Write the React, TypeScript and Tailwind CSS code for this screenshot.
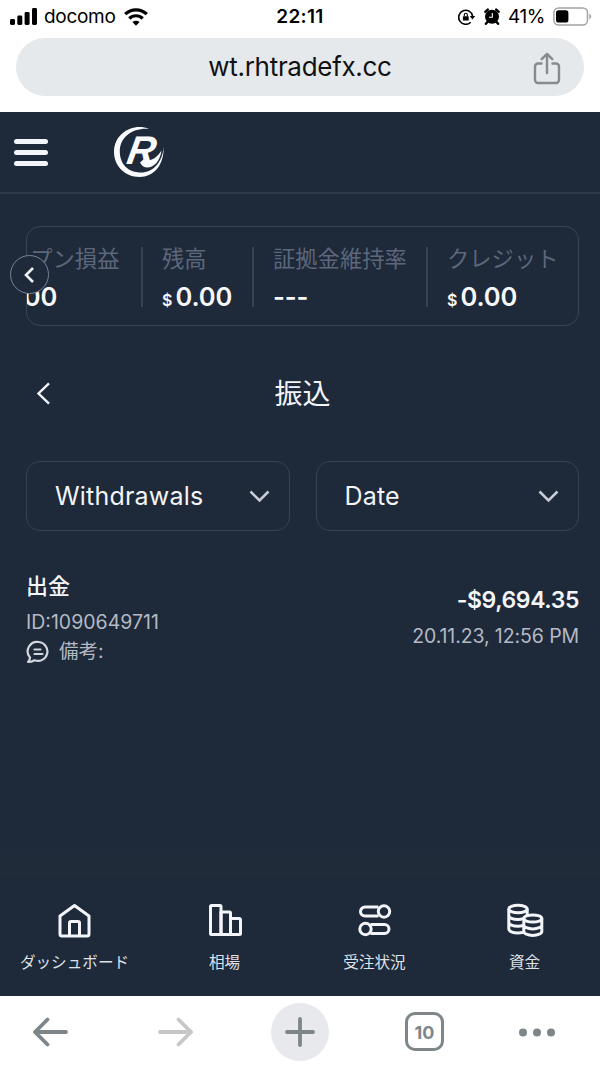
import type { ReactNode } from "react";

const stats = [
  { label: "オープン損益", currency: "$", value: "0.00", className: "-ml-[40px] w-[154px]" },
  { label: "残高", currency: "$", value: "0.00", className: "w-[111px] border-l-2 pl-[19px]" },
  { label: "証拠金維持率", currency: "", value: "---", className: "w-[174px] border-l-2 pl-[19px]" },
  { label: "クレジット", currency: "$", value: "0.00", className: "w-[150px] border-l-2 pl-[19px]" },
];

function StatusBar() {
  return (
    <div className="grid h-[38px] grid-cols-3 items-start text-black">
      <div className="flex h-[33px] items-center pl-[10px]">
        <svg width="27" height="17" viewBox="0 0 27 17" fill="currentColor">
          <rect x="0" y="11" width="5" height="6" rx="1.4" />
          <rect x="7.3" y="7.5" width="5" height="9.5" rx="1.4" />
          <rect x="14.6" y="4" width="5" height="13" rx="1.4" />
          <rect x="22" y="0" width="5" height="17" rx="1.4" />
        </svg>
        <span className="ml-[7px] w-[73px] pt-[2px] text-[19px] tracking-[-0.3px]">docomo</span>
        <svg className="ml-[7px]" width="24" height="18" viewBox="0 0 24 18" fill="none" stroke="currentColor" strokeWidth="3.2">
          <path d="M1.2 6.2a15.4 15.4 0 0 1 21.6 0" />
          <path d="M5.3 10.5a9.5 9.5 0 0 1 13.4 0" />
          <path d="M12 17.8 8.4 14.1a5.2 5.2 0 0 1 7.2 0z" fill="currentColor" stroke="none" />
        </svg>
      </div>
      <div className="flex h-[33px] items-center justify-center pt-[2px] text-[19px] font-semibold tracking-[0.3px]">22:11</div>
      <div className="flex h-[33px] items-center justify-end pr-[8px]">
        <svg width="18" height="16" viewBox="0 0 18 16" fill="none" stroke="currentColor" strokeWidth="1.6">
          <path d="M12.700 13.200A7 7 0 1 1 14.600 7" />
          <path d="M11.800 7h5.400l-2.700 3.600z" fill="currentColor" stroke="none" />
          <rect x="4.900" y="7.200" width="5.800" height="4.300" rx=".6" fill="currentColor" stroke="none" />
          <path d="M6.300 7.200V5.800a1.500 1.500 0 0 1 3 0v1.400" strokeWidth="1.1" />
        </svg>
        <svg className="ml-[8px]" width="16" height="17" viewBox="0 0 16 17">
          <circle cx="8" cy="8.7" r="7" fill="black" />
          <path d="M1.300 3.800 3.800 1.600M14.700 3.800l-2.500-2.200M3.400 14l-1.500 1.800M12.600 14l1.500 1.800" stroke="black" strokeWidth="2.400" strokeLinecap="round" />
          <path d="M8.300 5v4.200H5" fill="none" stroke="white" strokeWidth="1.1" />
        </svg>
        <span className="ml-[8px] w-[38px] pt-[2px] text-[19px] tracking-[-0.4px]">41%</span>
        <svg className="ml-[7px]" width="39" height="19" viewBox="0 0 39 19">
          <rect x=".9" y=".9" width="33.6" height="17.2" rx="4.8" fill="none" stroke="#a3a3a3" strokeWidth="1.5" />
          <rect x="3" y="3.2" width="12.4" height="12.4" rx="2.6" fill="black" />
          <path d="M36.4 6.500v6a3.400 3.400 0 0 0 0-6z" fill="#a3a3a3" />
        </svg>
      </div>
    </div>
  );
}

function AddressBar() {
  return (
    <div className="mx-4 grid h-[58px] grid-cols-[1fr_auto_1fr] items-center rounded-full bg-[#e5e9ec]">
      <span />
      <span className="text-[26px] leading-none tracking-[-0.3px] text-[#111]">wt.rhtradefx.cc</span>
      <svg className="mt-[3px] mr-[23px] justify-self-end" width="28" height="33" viewBox="0 0 28 33" fill="none" stroke="#858b91" strokeWidth="2.4" strokeLinecap="round" strokeLinejoin="round">
        <path d="M8.500 11.500H5a3 3 0 0 0-3 3V28a3 3 0 0 0 3 3h18a3 3 0 0 0 3-3V14.500a3 3 0 0 0-3-3h-3.500" />
        <path d="M14 21V2M8.700 7.200 14 1.900l5.300 5.300" />
      </svg>
    </div>
  );
}

function Logo() {
  return (
    <svg width="52" height="52" viewBox="0 0 52 52" fill="#fafbff">
      <path d="M36 2.800C21-3.500 1 6.500 1 26c0 14 11 25 25.500 25C41 51 51 39 50.700 21c-1.500 16-11 25.500-22.500 25.500C15 46.500 6.800 38 6.800 25.500 6.800 10.500 20 1.500 36 2.800z" />
      <text transform="translate(12.500 38) skewX(-10)" fontFamily="Liberation Sans" fontSize="40" fontWeight="700" fontStyle="italic" textLength="28" lengthAdjust="spacingAndGlyphs">R</text>
      <path d="M31 33c6 3 12 0 17.500-8.500C47 36 40 42 33.500 41.500c-3-.3-5-2-6.500-5z" />
    </svg>
  );
}

function AppHeader() {
  return (
    <header className="flex h-[82px] items-center border-b-2 border-[#2d3949] pl-[14px]">
      <div className="flex w-[34px] flex-col gap-[6px] pt-px">
        <span className="h-[5px] rounded-full bg-[#f4f5fb]" />
        <span className="h-[5px] rounded-full bg-[#f4f5fb]" />
        <span className="h-[5px] rounded-full bg-[#f4f5fb]" />
      </div>
      <div className="ml-[65px]">
        <Logo />
      </div>
    </header>
  );
}

function BalanceStrip() {
  return (
    <div className="relative mx-[26px] mt-[32px] w-[553px]">
      <div className="flex h-[100px] overflow-hidden rounded-[14px] border-[1.500px] border-[#394557] pt-[20px]">
        {stats.map((stat) => (
          <div key={stat.label} className={`h-[60px] shrink-0 border-[#354154] ${stat.className}`}>
            <div className="text-[22.300px] leading-[24px] whitespace-nowrap text-[#5c677b]">{stat.label}</div>
            <div className="mt-[11px] flex items-baseline gap-[3px] leading-[30px] font-semibold text-[#f7f8fc]">
              {stat.currency && <span className="text-[16px]">{stat.currency}</span>}
              <span className="text-[25.500px] tracking-[-0.100px]">{stat.value}</span>
            </div>
          </div>
        ))}
      </div>
      <button className="absolute top-[29px] -left-[16px] flex h-[39px] w-[39px] items-center justify-center rounded-full border-[1.500px] border-[#77839a] bg-[#1e2939]">
        <svg className="mr-px" width="12" height="16" viewBox="0 0 12 16" fill="none" stroke="#f0f2f7" strokeWidth="2.600">
          <path d="M10 1 3 8l7 7" />
        </svg>
      </button>
    </div>
  );
}

function Select({ value }: { value: string }) {
  return (
    <button className="flex h-[70px] flex-1 items-center justify-between rounded-[14px] border-[1.500px] border-[#364255] pr-[19px] pl-[28px] text-[25px] text-[#f2f4f8]">
      <span className="pt-[2px] tracking-[0.200px]">{value}</span>
      <svg width="21" height="14" viewBox="0 0 21 14" fill="none" stroke="#c8cdd7" strokeWidth="2.500">
        <path d="m1.500 2.500 9 9 9-9" />
      </svg>
    </button>
  );
}

function Transaction() {
  return (
    <div className="mx-[26px] mt-[39px] flex w-[553px] justify-between text-[19.500px] text-[#b4bac5]">
      <div>
        <div className="text-[22px] leading-[32px] font-medium text-[#f4f6fa]">出金</div>
        <div className="mt-[6px] leading-[28px]">ID:1090649711</div>
        <div className="mt-[1px] flex items-center leading-[28px]">
          <svg className="mt-[2px]" width="24" height="24" viewBox="0 0 24 24" fill="none" stroke="#d2d6de" strokeWidth="2.200" strokeLinecap="round" strokeLinejoin="round">
            <path d="M13 2A9.500 9.500 0 1 1 8.500 20.300C6.500 21.500 4.300 22 2 22c1.400-1.600 2.100-3 2-4.500A9.500 9.500 0 0 1 13 2z" />
            <path d="M8.500 9.500h6M8.500 14h8" />
          </svg>
          <span className="ml-[9px]">備考:</span>
        </div>
      </div>
      <div className="pt-[14px] text-right">
        <div className="text-[23px] leading-[32px] font-semibold tracking-[-0.400px] text-[#f4f6fa]">-$9,694.35</div>
        <div className="mt-[6px] leading-[28px] tracking-[-0.100px]">20.11.23, 12:56 PM</div>
      </div>
    </div>
  );
}

function NavItem({ label, children }: { label: string; children: ReactNode }) {
  return (
    <button className="flex w-[150px] flex-col items-center pr-px text-[#dfe2e9]">
      <svg width="38" height="36" viewBox="0 0 38 36" fill="none" stroke="#f4f5fb" strokeWidth="3" strokeLinejoin="round">
        {children}
      </svg>
      <span className="mt-[13px] text-[15.600px] leading-[24px] whitespace-nowrap">{label}</span>
    </button>
  );
}

function BottomNav() {
  return (
    <nav className="flex h-[119px] bg-[#1e2939] pt-[25px]">
      <NavItem label="ダッシュボード">
        <path d="M18.500 3.500 33 14v18a2 2 0 0 1-2 2H6a2 2 0 0 1-2-2V14z" />
        <path d="M13.500 33.500V21a1.500 1.500 0 0 1 1.500-1.500h7a1.500 1.500 0 0 1 1.500 1.500v12.500" />
      </NavItem>
      <NavItem label="相場">
        <rect x="4.500" y="3.500" width="10.500" height="29" rx="1" />
        <path d="M15 10h8.500a1 1 0 0 1 1 1v21.500H15zM24.500 16.500h8.500a1.500 1.500 0 0 1 1.500 1.500v13.500a1 1 0 0 1-1 1h-9z" />
      </NavItem>
      <NavItem label="受注状況">
        <path d="M22.500 5H9a4.500 4.500 0 0 0 0 9h13.500M14.500 22.500h14a4.500 4.500 0 0 1 0 9h-14" />
        <circle cx="28" cy="9.500" r="5.700" />
        <circle cx="9.500" cy="27" r="5.700" />
      </NavItem>
      <NavItem label="資金">
        <ellipse cx="12" cy="7" rx="9.200" ry="3.800" />
        <path d="M2.800 7v20c0 2.200 4 4 9.200 4 1.800 0 3.400-.2 5-.7M21.200 7v6M2.800 13.500c0 2.200 4 4 9.200 4 2 0 3.800-.3 5.300-.8M2.800 20.200c0 2.200 4 4 9.200 4 1.800 0 3.400-.2 5-.7" />
        <ellipse cx="26.800" cy="16.500" rx="9" ry="3.600" />
        <path d="M17.800 16.500v13c0 2.100 4 3.900 9 3.900s9-1.800 9-3.900v-13M17.800 23c0 2.100 4 3.900 9 3.900s9-1.800 9-3.900" />
      </NavItem>
    </nav>
  );
}

function BrowserToolbar() {
  return (
    <div className="flex h-[71px] bg-white pt-[7px] pl-[32px]">
      <svg className="mt-[14px]" width="37" height="30" viewBox="0 0 37 30" fill="none" stroke="#7e868a" strokeWidth="3.800" strokeLinecap="round" strokeLinejoin="round">
        <path d="M34 15H3M15.500 2.500 3 15l12.500 12.500" />
      </svg>
      <svg className="mt-[14px] ml-[88px]" width="37" height="30" viewBox="0 0 37 30" fill="none" stroke="#c7c7c7" strokeWidth="3.800" strokeLinecap="round" strokeLinejoin="round">
        <path d="M3 15h31M21.500 2.500 34 15 21.500 27.500" />
      </svg>
      <span className="ml-[77px] flex h-[58px] w-[58px] items-center justify-center rounded-full bg-[#e8e9ed]">
        <svg width="32" height="32" viewBox="0 0 32 32" stroke="#7e868a" strokeWidth="3.800" strokeLinecap="round">
          <path d="M16 3v26M3 16h26" />
        </svg>
      </span>
      <span className="mt-[9px] ml-[76px] flex h-[39px] w-[39px] items-center justify-center rounded-[10px] border-3 border-[#7e868a] pt-[2px] text-[18px] font-bold text-[#7e868a]">10</span>
      <svg className="mt-[25px] ml-[74px]" width="38" height="9" viewBox="0 0 38 9" fill="#7e868a">
        <circle cx="5" cy="4.500" r="4" />
        <circle cx="19" cy="4.500" r="4" />
        <circle cx="33" cy="4.500" r="4" />
      </svg>
    </div>
  );
}

export default function App() {
  return (
    <div className="flex h-[1067px] w-[600px] flex-col overflow-hidden bg-white font-[Inter,'Noto_Sans_CJK_JP',sans-serif]">
      <StatusBar />
      <AddressBar />
      <main className="mt-[16px] flex h-[884px] flex-col bg-[#1e2939]">
        <AppHeader />
        <BalanceStrip />
        <div className="mt-[43px] grid h-[48px] grid-cols-[1fr_auto_1fr] items-center pr-[21px] pl-[26px] text-[#f2f4fa]">
          <svg className="ml-[10px]" width="15" height="24" viewBox="0 0 15 24" fill="none" stroke="currentColor" strokeWidth="2.400">
            <path d="M13 2.300 2.500 12.500 13 22.700" />
          </svg>
          <h1 className="pt-px text-[28px] leading-none">振込</h1>
          <span />
        </div>
        <div className="mx-[26px] mt-[44px] flex w-[553px] gap-[26px]">
          <Select value="Withdrawals" />
          <Select value="Date" />
        </div>
        <Transaction />
        <div className="mt-auto h-[36px] bg-gradient-to-b from-[#1e2939] to-[#212c3b]" />
        <BottomNav />
      </main>
      <BrowserToolbar />
    </div>
  );
}
